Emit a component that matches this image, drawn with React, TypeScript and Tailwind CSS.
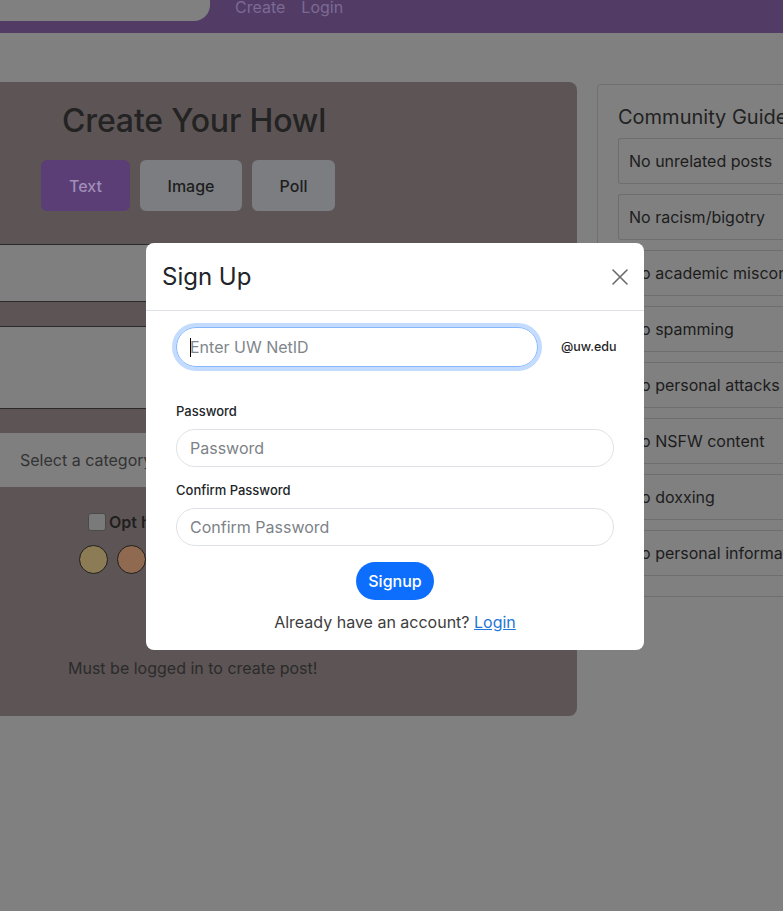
import { useState } from 'react'

const guidelines = [
  'No unrelated posts',
  'No racism/bigotry',
  'No academic misconduct',
  'No spamming',
  'No personal attacks',
  'No NSFW content',
  'No doxxing',
  'No personal information',
]

function CloseIcon() {
  return (
    <svg width="16" height="16" viewBox="0 0 16 16" fill="none" stroke="#6b6b6b" strokeWidth="1.6" strokeLinecap="round">
      <path d="M1 1l14 14M15 1L1 15" />
    </svg>
  )
}

function SignUpModal() {
  const [netId, setNetId] = useState('')

  return (
    <div className="absolute left-[146px] top-[243px] w-[498px] rounded-[8px] bg-white text-[#212529]">
      <div className="flex h-[68px] items-center justify-between border-b border-[#dee2e6] pl-[16px] pr-[16px]">
        <h2 className="text-[24px] leading-[36px] font-normal">Sign Up</h2>
        <button className="flex h-[16px] w-[16px] items-center justify-center">
          <CloseIcon />
        </button>
      </div>

      <div className="px-[30px] pt-[16px] pb-[16px]">
        <div className="flex items-center">
          <div className="relative">
            <input
              value={netId}
              onChange={(e) => setNetId(e.target.value)}
              placeholder="Enter UW NetID"
              className="h-[40px] w-[362px] rounded-full border border-[#86b7fe] px-[13px] text-[16px] outline-none ring-[4px] ring-[#0d6efd]/25 placeholder:text-[#80868b]"
            />
            <span className="absolute left-[14px] top-[11px] h-[19px] w-[1px] bg-black" />
          </div>
          <span className="ml-[23px] text-[12.5px] font-medium text-[#1f1f1f]">@uw.edu</span>
        </div>

        <label className="mt-[34px] mb-[8px] block text-[13px] leading-[20px] font-medium">Password</label>
        <input
          type="password"
          placeholder="Password"
          className="h-[38px] w-full rounded-full border border-[#dee2e6] px-[13px] text-[16px] outline-none placeholder:text-[#7d8288]"
        />

        <label className="mt-[13px] mb-[8px] block text-[13px] leading-[20px] font-medium">Confirm Password</label>
        <input
          type="password"
          placeholder="Confirm Password"
          className="h-[38px] w-full rounded-full border border-[#dee2e6] px-[13px] text-[16px] outline-none placeholder:text-[#7d8288]"
        />

        <div className="mt-[16px] flex justify-center">
          <button className="h-[38px] w-[78px] rounded-full bg-[#0d6efd] text-[16px] font-medium text-white">Signup</button>
        </div>

        <p className="mt-[10px] text-center text-[16px] leading-[24px] text-[#3d3d3d]">
          Already have an account?{' '}
          <a href="#" className="text-[#1f76d8] underline">Login</a>
        </p>
      </div>
    </div>
  )
}

export default function App() {
  return (
    <div className="relative h-[911px] w-[783px] overflow-hidden bg-[#808080] font-['Inter',sans-serif]">
      {/* nav */}
      <div className="flex h-[33px] items-start bg-[#523c66]">
        <div className="h-[21px] w-[210px] rounded-br-[16px] bg-[#808080]" />
        <div className="ml-[25px] mt-[-3px] flex gap-[16px] text-[16px] leading-[20px] text-[#7c6a94]">
          <span>Create</span>
          <span>Login</span>
        </div>
      </div>

      <div className="flex items-start pt-[49px]">
        {/* create post panel */}
        <div className="h-[634px] w-[577px] shrink-0 rounded-r-lg bg-[#5d5555]">
          <h1 className="pl-[62px] pt-[19px] text-[32px] leading-[40px] font-medium tracking-[-0.005em] text-[#232323]">Create Your Howl</h1>

          <div className="mt-[19px] flex gap-[10px] pl-[41px] text-[16px] font-medium">
            <button className="h-[51px] w-[89px] rounded-[6px] bg-[#5a3e75] text-[#a08db8]">Text</button>
            <button className="h-[51px] w-[102px] rounded-[6px] bg-[#7b7d80] text-[#1e1e1e]">Image</button>
            <button className="h-[51px] w-[83px] rounded-[6px] bg-[#7b7d80] text-[#1e1e1e]">Poll</button>
          </div>

          <div className="mt-[33px] h-[58px] w-[560px] border-y border-r border-[#2a2a2a] bg-[#7f7f7f]" />
          <div className="mt-[24px] h-[83px] w-[560px] border-y border-r border-[#2a2a2a] bg-[#7f7f7f]" />

          <div className="mt-[24px] flex h-[54px] w-[420px] items-center rounded-r-md bg-[#7f7f7f] pl-[20px] text-[16px] text-[#333]">
            Select a category
          </div>

          <div className="mt-[23px] flex items-center gap-[3px] pl-[88px]">
            <span className="h-[18px] w-[18px] rounded-[3px] border border-[#4a4a4a] bg-[#7a7a7a]" />
            <span className="text-[16px] font-semibold text-[#1f1f1f]">Opt hide name</span>
          </div>

          <div className="mt-[11px] flex gap-[9px] pl-[79px]">
            <span className="h-[29px] w-[29px] rounded-full border-[1.5px] border-[#1e1e1e] bg-[#8c7c55]" />
            <span className="h-[29px] w-[29px] rounded-full border-[1.5px] border-[#1e1e1e] bg-[#8f6a50]" />
            <span className="h-[29px] w-[29px] rounded-full border-[1.5px] border-[#1e1e1e] bg-[#557a8c]" />
          </div>

          <p className="mt-[82px] pl-[68px] text-[16px] leading-[24px] text-[#2b2b2b]">Must be logged in to create post!</p>
        </div>

        {/* guidelines */}
        <div className="ml-[20px] mt-[2px] w-[230px] shrink-0 rounded-[4px] border border-[#6f6f6f] pb-[20px] pl-[20px] pt-[18px]">
          <h3 className="text-[20px] leading-[28px] whitespace-nowrap text-[#222]">Community Guidelines</h3>
          <div className="mt-[7px] flex flex-col gap-[10px]">
            {guidelines.map((g) => (
              <div key={g} className="flex h-[46px] items-center whitespace-nowrap rounded-l-[3px] border border-r-0 border-[#6e6e6e] pl-[10px] text-[16px] text-[#1c1c1c]">
                {g}
              </div>
            ))}
          </div>
        </div>
      </div>

      <SignUpModal />
    </div>
  )
}
